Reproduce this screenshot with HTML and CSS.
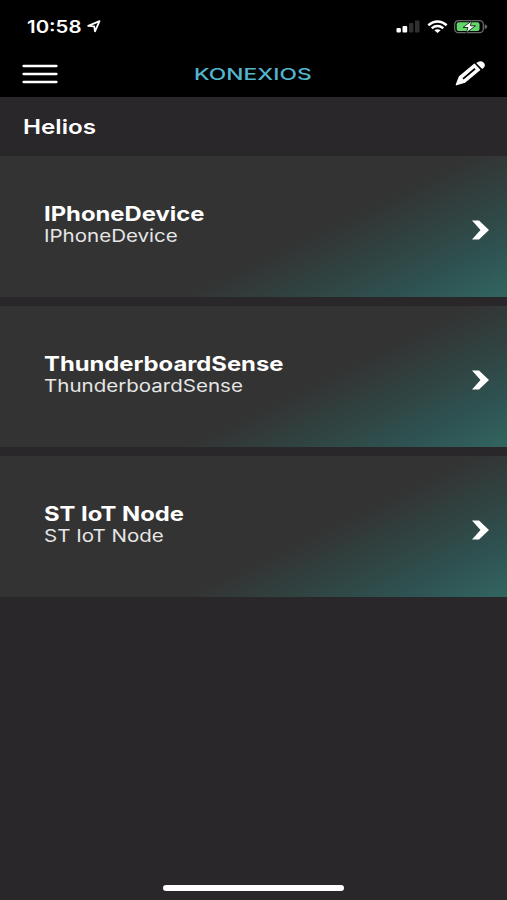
FILE: index.html
```html
<!DOCTYPE html>
<html lang="en">
<head>
<meta charset="utf-8">
<title>Konexios</title>
<link rel="stylesheet" href="styles.css">
</head>
<body>
<div class="screen">
  <header class="top">
    <div class="status">
      <div class="clock"><span class="time">10:58</span>
        <svg class="location" width="14" height="13" viewBox="0 0 14 13"><path d="M1.2 5.8 12.5 1.2 8 11.3 7.2 6.3Z" fill="none" stroke="#fff" stroke-width="1.8" stroke-linejoin="round"/></svg>
      </div>
      <div class="indicators">
        <svg width="25" height="14" viewBox="0 0 25 14"><rect x="0.5" y="8" width="4.4" height="4.5" rx="1" fill="#fff"/><rect x="6.5" y="6" width="4.7" height="6.5" rx="1" fill="#fff"/><rect x="13" y="3" width="4.4" height="9.5" rx="1" fill="#303032"/><rect x="19" y="0.5" width="4.5" height="12" rx="1" fill="#303032"/></svg>
        <svg width="21" height="14" viewBox="0 0 21 14"><path d="M1.3 5.2Q10.5-2.2 19.7 5.2" fill="none" stroke="#fff" stroke-width="2.5"/><path d="M4.7 8.2Q10.5 3.8 16.3 8.2" fill="none" stroke="#fff" stroke-width="2.4"/><path d="M7.3 10.3Q10.5 8.1 13.7 10.3L10.5 13Z" fill="#fff"/></svg>
        <svg width="34" height="14" viewBox="0 0 34 14"><rect x="0.7" y="0.7" width="28.6" height="12" rx="3.6" fill="none" stroke="#68696b" stroke-width="1.3"/><rect x="2.7" y="2.3" width="22.8" height="8.8" rx="2" fill="#63d66b"/><path d="M30.7 4.3Q33.3 5 33.3 6.7T30.7 9.1Z" fill="#68696b"/><path d="M17.7 0.8 9 7.5H14L12.2 12.8 21.5 5.8H16.3Z" fill="#fff" stroke="#102015" stroke-width="0.9"/></svg>
      </div>
    </div>
    <nav class="nav">
      <svg class="menu" width="36" height="20" viewBox="0 0 36 20"><path d="M1.5 2H34.5M1.5 10H34.5M1.5 18H34.5" stroke="#fff" stroke-width="2.3" stroke-linecap="round"/></svg>
      <div class="brand"><span>KONEXIOS</span></div>
      <svg class="edit" width="31" height="27" viewBox="0 0 31 27"><path d="M1.3 24.8 4.4 16.8 19.4 4.2 24.7 9.9 10 22.1Z" fill="#fff" stroke="#fff" stroke-width="1.2" stroke-linejoin="round"/><path d="M8 18.9 20 8.8" stroke="#000" stroke-width="1.8"/><path d="M21.2 3.1Q25.3-.3 28.6 2.6 31.6 5.7 27.2 9Z" fill="#fff"/></svg>
    </nav>
  </header>
  <h1 class="heading"><span>Helios</span></h1>
  <main class="devices">
    <section class="card">
      <div class="info"><h2 class="name">IPhoneDevice</h2><p class="type">IPhoneDevice</p></div>
      <svg class="chevron" width="17" height="20" viewBox="0 0 17 20"><path d="M0 0.5H7L17 10 7 19.5H0L8.5 10Z" fill="#fff"/></svg>
    </section>
    <section class="card">
      <div class="info"><h2 class="name">ThunderboardSense</h2><p class="type">ThunderboardSense</p></div>
      <svg class="chevron" width="17" height="20" viewBox="0 0 17 20"><path d="M0 0.5H7L17 10 7 19.5H0L8.5 10Z" fill="#fff"/></svg>
    </section>
    <section class="card">
      <div class="info"><h2 class="name">ST IoT Node</h2><p class="type">ST IoT Node</p></div>
      <svg class="chevron" width="17" height="20" viewBox="0 0 17 20"><path d="M0 0.5H7L17 10 7 19.5H0L8.5 10Z" fill="#fff"/></svg>
    </section>
  </main>
  <footer class="home"><i class="home-bar"></i></footer>
</div>
</body>
</html>
```
FILE: styles.css
```css
* { box-sizing: border-box; margin: 0; }
body { background: #29272a; color: #fff; font-family: Inter, "Liberation Sans", sans-serif; }
svg { display: block; flex: none; }
.screen { width: 507px; height: 900px; display: flex; flex-direction: column; overflow: hidden; }
.top { height: 97px; background: #000; flex: none; }
.status { height: 49px; padding: 20px 19px 0 27px; display: flex; justify-content: space-between; }
.clock { display: flex; }
.time { width: 60px; font-size: 17px; line-height: 14px; font-weight: 600; white-space: nowrap; transform: scaleX(1.2); transform-origin: left; }
.location { margin-top: 0; }
.indicators { display: flex; gap: 6px; }
.nav { height: 48px; padding: 1px 21px 0 22px; display: flex; align-items: center; }
.brand { width: 118px; margin: 3px 0 0 136px; color: #53b5cd; font-size: 15.5px; line-height: 18px; font-weight: 500; }
.brand span { display: inline-block; transform: scaleX(1.47); transform-origin: left; }
.edit { margin-left: auto; }
.heading { height: 59px; padding: 1px 0 0 23px; font-size: 20px; line-height: 59px; font-weight: 600; flex: none; }
.heading span { display: inline-block; transform: scaleX(1.21); transform-origin: left; }
.devices { display: grid; grid-auto-rows: 141px; gap: 9.2px; }
.card { padding: 7px 18px 0 44px; display: flex; align-items: center; justify-content: space-between; background: linear-gradient(154deg, #333 59%, #304341 73%, #2e5352 87%, #32655f 100%); }
.info { margin-top: -11px; transform: scaleX(1.19); transform-origin: left; white-space: nowrap; }
.name { font-size: 20px; line-height: 23px; font-weight: 700; }
.type { margin-top: -1px; padding-bottom: 1px; font-size: 17.25px; line-height: 21px; font-weight: 400; color: #e6e6e6; }
.home { margin-top: auto; height: 15px; display: flex; justify-content: center; }
.home-bar { width: 181px; height: 6px; border-radius: 3px; background: #fff; }
```
